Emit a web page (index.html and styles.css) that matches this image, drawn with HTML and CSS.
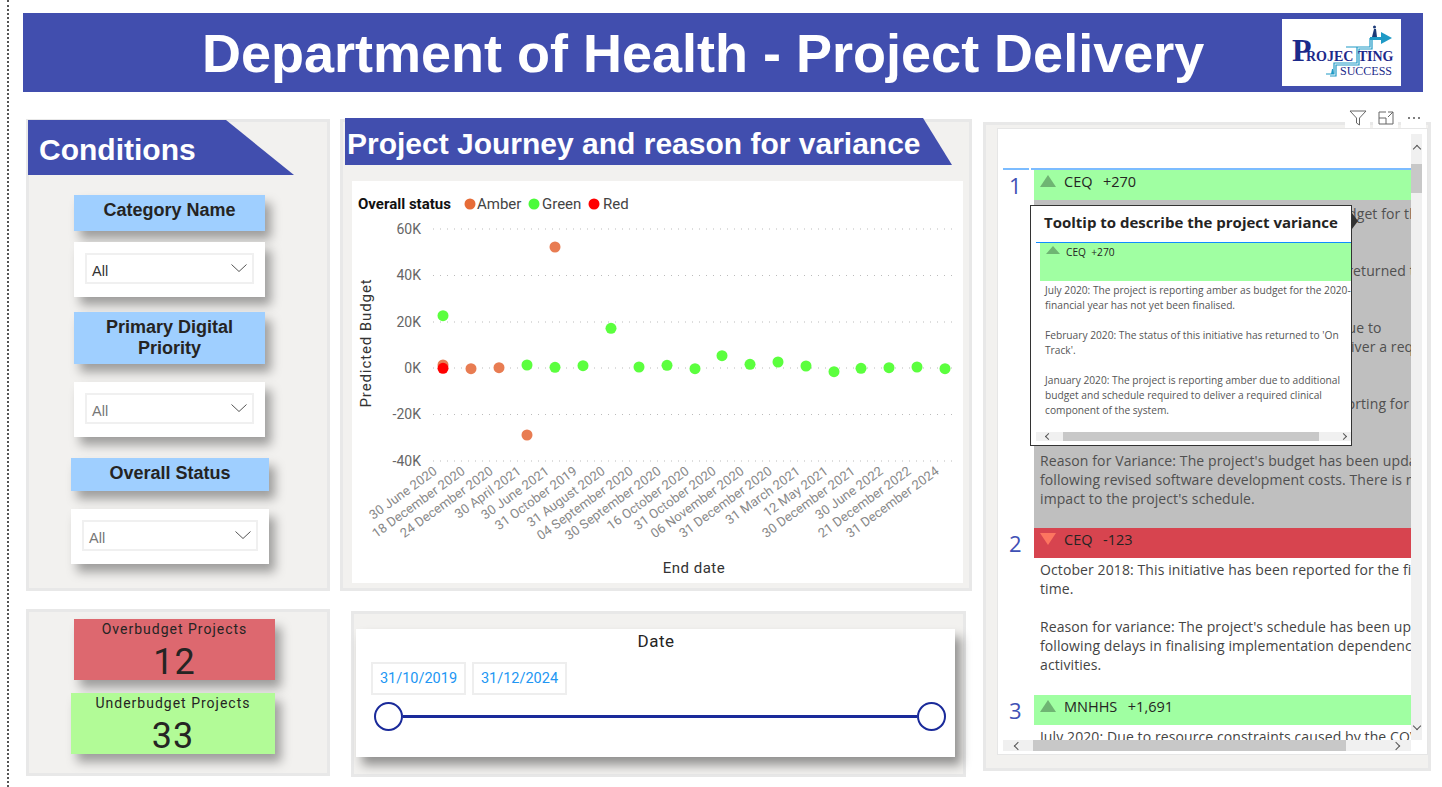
FILE: index.html
```html
<!DOCTYPE html>
<html lang="en">
<head>
    <meta charset="UTF-8">
    <title>Department of Health - Project Delivery</title>
    <link rel="stylesheet" href="styles.css">
</head>
<body>
<div class="report">

    <!-- Title bar -->
    <header class="title-bar">
        <h1>Department of Health - Project Delivery</h1>
        <div class="logo">
            <svg viewBox="1282 18 119 67" width="119" height="67">
                <g fill="none" stroke="#1f9ac6" stroke-width="1.200">
                    <path d="M1326 73h8v-11h23v-16M1346 46h24v-9"/>
                    <path d="M1330 75h6v-11h23v-16h13v-9"/>
                </g>
                <path d="M1370 36h12v3h-12z" fill="#1f9ac6"/>
                <path d="M1381 31l11 6l-11 6z" fill="#1f9ac6"/>
                <path d="M1372 36l2-8 2 0 1 8z" fill="#1c3a78"/>
                <circle cx="1374.500" cy="26" r="1.500" fill="#1c3a78"/>
                <path d="M1331 73l1-5 1 0 1 5z" fill="#1f9ac6"/>
                <text x="1292" y="60" class="logo-big">P</text>
                <text x="1306" y="60" class="logo-mid">ROJEC</text>
                <text x="1358" y="60" class="logo-mid">T</text>
                <text x="1367" y="60" class="logo-mid">ING</text>
                <text x="1340" y="74" class="logo-small">SUCCESS</text>
            </svg>
        </div>
    </header>

    <main class="canvas">

        <!-- Left column -->
        <div class="column col-left">
            <section class="panel conditions">
                <div class="banner banner-conditions">Conditions</div>
                <div class="filters">
                    <div class="filter-label label-one">Category Name</div>
                    <div class="filter-card card-one">
                        <div class="dropdown dark"><span>All</span><svg class="chevron" viewBox="0 0 16 8"><path d="M.5.5L8 7.500 15.500.5"/></svg></div>
                    </div>
                    <div class="filter-label label-two">Primary Digital Priority</div>
                    <div class="filter-card card-two">
                        <div class="dropdown"><span>All</span><svg class="chevron" viewBox="0 0 16 8"><path d="M.5.5L8 7.500 15.500.5"/></svg></div>
                    </div>
                    <div class="filter-label label-three wide">Overall Status</div>
                    <div class="filter-card card-three wide">
                        <div class="dropdown"><span>All</span><svg class="chevron" viewBox="0 0 16 8"><path d="M.5.5L8 7.500 15.500.5"/></svg></div>
                    </div>
                </div>
            </section>

            <section class="panel kpis">
                <div class="kpi kpi-red">
                    <div class="kpi-name">Overbudget Projects</div>
                    <div class="kpi-value">12</div>
                </div>
                <div class="kpi kpi-green">
                    <div class="kpi-name">Underbudget Projects</div>
                    <div class="kpi-value">33</div>
                </div>
            </section>
        </div>

        <!-- Middle column -->
        <div class="column col-mid">
            <section class="panel journey">
                <div class="banner banner-journey">Project Journey and reason for variance</div>
                <div class="chart">
                    <svg viewBox="352 181 611 402" width="611" height="402">
                        <!-- Legend -->
                        <text x="358" y="209" class="legend-title">Overall status</text>
                        <circle cx="470" cy="204" r="5.500" fill="#e66c37"/>
                        <text x="477" y="209" class="legend-text">Amber</text>
                        <circle cx="534" cy="204" r="5.500" fill="#4bfb3a"/>
                        <text x="542" y="209" class="legend-text">Green</text>
                        <circle cx="594" cy="204" r="5.500" fill="#ff0000"/>
                        <text x="603" y="209" class="legend-text">Red</text>

                        <!-- Grid -->
                        <g class="grid">
                            <line x1="433" x2="958" y1="229" y2="229"/>
                            <line x1="433" x2="958" y1="275.500" y2="275.500"/>
                            <line x1="433" x2="958" y1="322" y2="322"/>
                            <line x1="433" x2="958" y1="368" y2="368"/>
                            <line x1="433" x2="958" y1="414.500" y2="414.500"/>
                            <line x1="433" x2="958" y1="461" y2="461"/>
                        </g>
                        <g class="y-labels">
                            <text x="421" y="234">60K</text>
                            <text x="421" y="280">40K</text>
                            <text x="421" y="327">20K</text>
                            <text x="421" y="373">0K</text>
                            <text x="421" y="419">-20K</text>
                            <text x="421" y="466">-40K</text>
                        </g>

                        <!-- Points -->
                        <g class="amber">
                            <circle cx="443" cy="365" r="5.500"/>
                            <circle cx="471" cy="368.700" r="5.500"/>
                            <circle cx="499" cy="367.700" r="5.500"/>
                            <circle cx="527" cy="435" r="5.500"/>
                            <circle cx="555" cy="247" r="5.500"/>
                        </g>
                        <circle cx="443" cy="368.300" r="5.500" fill="#ff0000"/>
                        <g class="green">
                            <circle cx="443" cy="315.700" r="5.500"/>
                            <circle cx="527" cy="365" r="5.500"/>
                            <circle cx="555" cy="367.300" r="5.500"/>
                            <circle cx="583" cy="365.700" r="5.500"/>
                            <circle cx="611" cy="328.300" r="5.500"/>
                            <circle cx="639" cy="367" r="5.500"/>
                            <circle cx="667" cy="365.300" r="5.500"/>
                            <circle cx="695" cy="368.700" r="5.500"/>
                            <circle cx="722" cy="355.700" r="5.500"/>
                            <circle cx="750" cy="364.300" r="5.500"/>
                            <circle cx="778" cy="362" r="5.500"/>
                            <circle cx="806" cy="366" r="5.500"/>
                            <circle cx="834" cy="371.700" r="5.500"/>
                            <circle cx="861" cy="368.300" r="5.500"/>
                            <circle cx="889" cy="367.700" r="5.500"/>
                            <circle cx="917" cy="367" r="5.500"/>
                            <circle cx="945" cy="368.700" r="5.500"/>
                        </g>

                        <!-- Date labels -->
                        <g class="x-labels">
                            <text transform="translate(438 473) rotate(-36)">30 June 2020</text>
                            <text transform="translate(466 473) rotate(-36)">18 December 2020</text>
                            <text transform="translate(494 473) rotate(-36)">24 December 2020</text>
                            <text transform="translate(522 473) rotate(-36)">30 April 2021</text>
                            <text transform="translate(550 473) rotate(-36)">30 June 2021</text>
                            <text transform="translate(578 473) rotate(-36)">31 October 2019</text>
                            <text transform="translate(606 473) rotate(-36)">31 August 2020</text>
                            <text transform="translate(634 473) rotate(-36)">04 September 2020</text>
                            <text transform="translate(662 473) rotate(-36)">30 September 2020</text>
                            <text transform="translate(690 473) rotate(-36)">16 October 2020</text>
                            <text transform="translate(717 473) rotate(-36)">31 October 2020</text>
                            <text transform="translate(745 473) rotate(-36)">06 November 2020</text>
                            <text transform="translate(773 473) rotate(-36)">31 December 2020</text>
                            <text transform="translate(801 473) rotate(-36)">31 March 2021</text>
                            <text transform="translate(829 473) rotate(-36)">12 May 2021</text>
                            <text transform="translate(856 473) rotate(-36)">30 December 2021</text>
                            <text transform="translate(884 473) rotate(-36)">30 June 2022</text>
                            <text transform="translate(912 473) rotate(-36)">21 December 2022</text>
                            <text transform="translate(940 473) rotate(-36)">31 December 2024</text>
                        </g>

                        <text x="694" y="573" class="axis-title" text-anchor="middle">End date</text>
                        <text transform="translate(371 343) rotate(-90)" class="axis-title axis-title-y" text-anchor="middle">Predicted Budget</text>
                    </svg>
                </div>
            </section>

            <section class="panel date-panel">
                <div class="date-card">
                    <div class="date-title">Date</div>
                    <div class="date-boxes">
                        <div class="date-box">31/10/2019</div>
                        <div class="date-box">31/12/2024</div>
                    </div>
                    <div class="slider">
                        <span class="handle"></span>
                        <span class="track"></span>
                        <span class="handle"></span>
                    </div>
                </div>
            </section>
        </div>

        <!-- Right column -->
        <section class="panel variance">
            <div class="visual-icons">
                <span class="icon-box">
                    <svg viewBox="0 0 18 16" width="18" height="16"><path d="M1 1h16l-6.500 7v7l-3-2v-5z" fill="none" stroke="#666" stroke-width="1"/></svg>
                </span>
                <span class="icon-box">
                    <svg viewBox="0 0 16 14" width="16" height="14"><path d="M8 1H1v12h14V6M1 7h7v6M10 1h5v5M15 1L10 6" fill="none" stroke="#666" stroke-width="1"/></svg>
                </span>
                <span class="icon-box">
                    <svg viewBox="0 0 14 4" width="14" height="4"><circle cx="2" cy="2" r="1" fill="#555"/><circle cx="7" cy="2" r="1" fill="#555"/><circle cx="12" cy="2" r="1" fill="#555"/></svg>
                </span>
            </div>

            <div class="matrix-card">
                <div class="matrix">
                    <div class="matrix-view">
                        <div class="matrix-rule"><span></span><span></span></div>

                        <div class="row">
                            <div class="rank">1</div>
                            <div class="row-main">
                                <div class="row-head head-green"><i class="tri-up"></i>CEQ&nbsp;&nbsp;+270</div>
                                <div class="row-body body-grey">
                                    July 2020: The project is reporting amber as budget for the 2020-<br>
                                    financial year has not yet been finalised.<br>
                                    <br>
                                    February 2020: The status of this initiative has returned to 'On<br>
                                    Track'.<br>
                                    <br>
                                    January 2020: The project is reporting amber due to<br>
                                    additional budget and schedule required to deliver a required<br>
                                    clinical component of the system.<br>
                                    <br>
                                    October 2019: This initiative has now been reporting for the first<br>
                                    time.<br>
                                    <br>
                                    Reason for Variance: The project's budget has been updated<br>
                                    following revised software development costs. There is no<br>
                                    impact to the project's schedule.
                                </div>
                            </div>
                        </div>

                        <div class="row">
                            <div class="rank">2</div>
                            <div class="row-main">
                                <div class="row-head head-red"><i class="tri-down"></i>CEQ&nbsp;&nbsp;-123</div>
                                <div class="row-body body-white">
                                    October 2018: This initiative has been reported for the first<br>
                                    time.<br>
                                    <br>
                                    Reason for variance: The project's schedule has been updated<br>
                                    following delays in finalising implementation dependencies and<br>
                                    activities.
                                </div>
                            </div>
                        </div>

                        <div class="row">
                            <div class="rank">3</div>
                            <div class="row-main">
                                <div class="row-head head-green"><i class="tri-up"></i>MNHHS&nbsp;&nbsp;+1,691</div>
                                <div class="row-body body-white">
                                    July 2020: Due to resource constraints caused by the COVID-19
                                </div>
                            </div>
                        </div>
                    </div>

                    <div class="scroll-v">
                        <i class="chev chev-up"></i>
                        <span class="thumb-v"></span>
                        <i class="chev chev-down"></i>
                    </div>
                    <div class="scroll-h">
                        <i class="chev chev-left"></i>
                        <span class="thumb-h"></span>
                        <i class="chev chev-right"></i>
                    </div>
                </div>
            </div>

            <!-- Tooltip over the table -->
            <div class="tooltip">
                <div class="tooltip-title">Tooltip to describe the project variance</div>
                <div class="tooltip-head"><i class="tri-up tri-small"></i>CEQ&nbsp;&nbsp;+270</div>
                <div class="tooltip-body">
                    July 2020: The project is reporting amber as budget for the 2020-<br>
                    financial year has not yet been finalised.<br>
                    <br>
                    February 2020: The status of this initiative has returned to 'On<br>
                    Track'.<br>
                    <br>
                    January 2020: The project is reporting amber due to additional<br>
                    budget and schedule required to deliver a required clinical<br>
                    component of the system.
                </div>
                <div class="tooltip-scroll">
                    <i class="chev chev-left"></i>
                    <span class="thumb-tip"></span>
                    <i class="chev chev-right"></i>
                </div>
                <i class="tooltip-arrow"></i>
            </div>
        </section>

    </main>
</div>
</body>
</html>
```

FILE: styles.css
```css
* {
    box-sizing: border-box;
}

body {
    margin: 0;
    width: 1442px;
    height: 787px;
    overflow: hidden;
    background-color: #fff;
    font-family: 'Liberation Sans', Arial, sans-serif;
}

.report {
    height: 787px;
    margin-left: 7px;
    padding: 13px 0 0 14px;
    border-left: 2px dotted #555;
}

/* Title bar */
.title-bar {
    display: flex;
    align-items: center;
    justify-content: space-between;
    width: 1400px;
    height: 79px;
    padding: 0 22px 0 179px;
    background-color: #414eae;
}

.title-bar h1 {
    margin: 0;
    color: #fff;
    font-size: 54px;
    font-weight: bold;
    white-space: nowrap;
}

.logo {
    width: 119px;
    height: 67px;
    background-color: #fff;
}

.logo svg {
    display: block;
}

.logo text {
    font-family: 'Liberation Serif', serif;
    fill: #1c2a8a;
}

.logo-big {
    font-size: 32px;
    font-weight: bold;
}

.logo-mid {
    font-size: 14px;
    font-weight: bold;
}

.logo-small {
    font-size: 12px;
}

/* Main grid */
.canvas {
    display: flex;
    margin: 27px 0 0 3px;
}

.column {
    display: flex;
    flex-direction: column;
}

.col-left {
    width: 304px;
    margin-right: 10px;
}

.col-mid {
    width: 632px;
    margin-right: 11px;
}

.panel {
    background-color: #f2f1ef;
    border: 3px solid #e8e8e8;
}

/* Banners */
.banner {
    background-color: #414eae;
    color: #fff;
    font-weight: bold;
    white-space: nowrap;
}

.banner-conditions {
    width: 266px;
    height: 55px;
    margin: -2px 0 0 -1px;
    padding: 13px 0 0 11px;
    font-size: 30px;
    clip-path: polygon(0 0, 198px 0, 100% 100%, 0 100%);
}

.banner-journey {
    width: 607px;
    height: 47px;
    margin: -4px 0 0 2px;
    padding: 9px 0 0 2px;
    font-size: 30px;
    clip-path: polygon(0 0, 578px 0, 100% 100%, 0 100%);
}

/* Left filters */
.conditions {
    height: 472px;
}

.filters {
    display: flex;
    flex-direction: column;
    margin-left: 45px;
    width: 191px;
}

.filter-label {
    padding: 5px 20px 0;
    background-color: #9fcfff;
    color: #252423;
    font-size: 18px;
    font-weight: bold;
    line-height: 21px;
    text-align: center;
    box-shadow: 6px 8px 10px rgba(0, 0, 0, 0.35);
}

.label-one {
    height: 36px;
    margin-top: 20px;
}

.label-two {
    height: 52px;
    margin-top: 15px;
    padding-top: 5px;
}

.label-three {
    height: 33px;
    margin-top: 21px;
    padding-top: 5px;
}

.wide {
    width: 198px;
    margin-left: -3px;
}

.filter-card {
    height: 55px;
    padding: 11px;
    background-color: #fff;
    box-shadow: 6px 8px 10px rgba(0, 0, 0, 0.35);
}

.card-one {
    margin-top: 11px;
}

.card-two {
    margin-top: 18px;
}

.card-three {
    margin-top: 18px;
}

.dropdown {
    display: flex;
    align-items: center;
    justify-content: space-between;
    height: 31px;
    padding: 4px 5px 0 5px;
    border: 2px solid #f0f0f0;
    color: #777;
    font-size: 14.500px;
}

.dropdown.dark {
    color: #333;
}

.chevron {
    width: 16px;
    height: 8px;
    margin-top: -6px;
    fill: none;
    stroke: #555;
    stroke-width: 1;
}

/* KPI cards */
.col-left .kpis {
    height: 167px;
    margin-top: 18px;
    padding: 7px 0 0 42px;
}

.kpi {
    height: 61px;
    color: #252423;
    text-align: center;
    font-family: Roboto, sans-serif;
    box-shadow: 6px 8px 10px rgba(0, 0, 0, 0.35);
}

.kpi-red {
    width: 201px;
    margin-left: 3px;
    background-color: #dd686f;
}

.kpi-green {
    width: 204px;
    margin-top: 13px;
    background-color: #b2fb97;
}

.kpi-name {
    padding-top: 1px;
    font-size: 14px;
    line-height: 18px;
    letter-spacing: 1px;
}

.kpi-value {
    padding-top: 3px;
    font-size: 36px;
    line-height: 42px;
    letter-spacing: 1px;
}

/* Chart */
.journey {
    height: 472px;
}

.chart {
    width: 611px;
    height: 402px;
    margin: 16px 0 0 9px;
    background-color: #fff;
}

.chart svg {
    display: block;
    font-family: Roboto, sans-serif;
}

.legend-title {
    font-size: 15px;
    font-weight: bold;
    fill: #111;
}

.legend-text {
    font-size: 15px;
    fill: #444;
}

.grid line {
    stroke: #bbb;
    stroke-width: 1;
    stroke-dasharray: 1 6;
}

.y-labels text {
    font-size: 14px;
    fill: #666;
    text-anchor: end;
}

.x-labels text {
    font-size: 13px;
    fill: #888;
    text-anchor: end;
    letter-spacing: 0.100px;
}

.amber circle {
    fill: #e87c52;
}

.green circle {
    fill: #5bff3e;
}

.axis-title {
    font-size: 15px;
    fill: #333;
    letter-spacing: 0.500px;
}

.axis-title-y {
    letter-spacing: 0.900px;
}

/* Date slicer */
.date-panel {
    width: 615px;
    height: 166px;
    margin: 20px 0 0 11px;
}

.date-card {
    width: 599px;
    height: 128px;
    margin: 15px 0 0 2px;
    padding: 0 9px 0 15px;
    background-color: #fff;
    box-shadow: 6px 8px 10px rgba(0, 0, 0, 0.4);
}

.date-title {
    padding: 2px 5px 0 0;
    font-family: Roboto, sans-serif;
    font-size: 17px;
    line-height: 20px;
    letter-spacing: 0.500px;
    color: #252423;
    text-align: center;
}

.date-boxes {
    display: flex;
    gap: 6px;
    margin-top: 11px;
}

.date-box {
    width: 95px;
    height: 33px;
    border: 2px solid #eee;
    color: #2196f3;
    font-family: Roboto, sans-serif;
    font-size: 14.500px;
    line-height: 30px;
    text-align: center;
}

.slider {
    display: flex;
    align-items: center;
    margin: 7px 0 0 3px;
}

.track {
    flex: 1;
    height: 3px;
    background-color: #1a2a9a;
}

.handle {
    width: 29px;
    height: 29px;
    border: 2px solid #1a2a9a;
    border-radius: 50%;
    background-color: #fff;
}

/* Right panel */
.variance {
    position: relative;
    width: 448px;
    height: 649px;
    margin-top: 3px;
    padding: 3px 1px 0 11px;
}

.visual-icons {
    position: absolute;
    top: -17px;
    right: 2px;
    display: flex;
    gap: 3px;
}

.icon-box {
    display: flex;
    align-items: center;
    justify-content: center;
    width: 25px;
    height: 20px;
    background-color: #fff;
}

.matrix-card {
    width: 431px;
    height: 627px;
    padding: 5px 0 0 5px;
    background-color: #fff;
    border: 1px solid #e6e6e6;
}

.matrix {
    display: grid;
    grid-template-columns: 408px 11px;
    grid-template-rows: 606px 11px;
}

.matrix-view {
    overflow: hidden;
    padding-top: 34px;
    font-family: 'Open Sans', sans-serif;
}

.matrix-rule {
    display: flex;
    gap: 2px;
    height: 2px;
}

.matrix-rule span {
    width: 26px;
    background-color: #7cbcff;
}

.matrix-rule span + span {
    flex: 1;
}

.row {
    display: flex;
}

.rank {
    width: 31px;
    padding: 2px 0 0 6px;
    color: #3f51b5;
    font-size: 22px;
    line-height: 26px;
    text-align: left;
}

.row-main {
    width: 377px;
    overflow: hidden;
}

.row-head {
    display: flex;
    align-items: flex-start;
    height: 30px;
    padding: 2px 0 0 6px;
    color: #252423;
    font-size: 14.500px;
    line-height: 19px;
    word-spacing: 1.500px;
    white-space: nowrap;
}

.head-green {
    background-color: #a0ffa2;
}

.head-red {
    background-color: #d7444f;
}

.tri-up,
.tri-down {
    width: 0;
    height: 0;
    margin: 3px 8px 0 0;
    border-left: 8.500px solid transparent;
    border-right: 8.500px solid transparent;
}

.tri-up {
    border-bottom: 12px solid #6fb573;
}

.tri-down {
    border-top: 12px solid #fd7560;
}

.row-body {
    padding-left: 6px;
    font-size: 14px;
    line-height: 19px;
    letter-spacing: 0.100px;
    white-space: nowrap;
}

.body-grey {
    height: 328px;
    padding-top: 3.500px;
    background-color: #bfbfbf;
    color: #505050;
}

.body-white {
    height: 137px;
    padding-top: 2px;
    color: #444;
}

/* Scrollbars */
.chev {
    width: 6px;
    height: 6px;
    flex: none;
    border-top: 1px solid #555;
    border-left: 1px solid #555;
}

.chev-up {
    transform: rotate(45deg);
}

.chev-down {
    transform: rotate(225deg);
}

.chev-left {
    transform: rotate(-45deg);
}

.chev-right {
    transform: rotate(135deg);
}

.scroll-v {
    display: flex;
    flex-direction: column;
    align-items: center;
    padding-top: 12px;
    background-color: #f0f0f0;
}

.thumb-v {
    width: 11px;
    height: 29px;
    margin: 12px 0 530px;
    background-color: #c8c8c8;
}

.scroll-h {
    display: flex;
    align-items: center;
    padding-left: 12px;
    background-color: #f0f0f0;
}

.thumb-h {
    width: 313px;
    height: 11px;
    margin: 0 47px 0 12px;
    background-color: #c8c8c8;
}

/* Tooltip */
.tooltip {
    position: absolute;
    top: 80px;
    left: 44px;
    width: 322px;
    height: 241px;
    padding-top: 6px;
    background-color: #fff;
    border: 1px solid #333;
    font-family: 'Open Sans', sans-serif;
}

.tooltip-title {
    height: 31px;
    margin-left: 5px;
    padding-left: 8px;
    border-bottom: 1px solid #118dff;
    color: #252423;
    font-size: 15px;
    font-weight: bold;
    line-height: 20px;
    white-space: nowrap;
}

.tooltip-head {
    display: flex;
    height: 38px;
    margin-left: 9px;
    padding: 1px 0 0 6px;
    background-color: #a0ffa2;
    color: #252423;
    font-size: 10.200px;
    line-height: 16px;
}

.tri-small {
    margin: 2px 6px 0 0;
    border-left-width: 7px;
    border-right-width: 7px;
    border-bottom-width: 8px;
}

.tooltip-body {
    height: 151px;
    padding: 2px 0 0 14px;
    color: #555;
    font-size: 10.200px;
    line-height: 15px;
    white-space: nowrap;
    overflow: hidden;
}

.tooltip-scroll {
    display: flex;
    align-items: center;
    height: 9px;
    margin-left: 5px;
    padding-left: 10px;
    background-color: #f0f0f0;
}

.tooltip-scroll .chev {
    width: 5px;
    height: 5px;
}

.thumb-tip {
    width: 256px;
    height: 9px;
    margin: 0 22px 0 12px;
    background-color: #c8c8c8;
}

.tooltip-arrow {
    position: absolute;
    top: 7px;
    left: 321px;
    width: 0;
    height: 0;
    border-top: 8px solid transparent;
    border-bottom: 8px solid transparent;
    border-left: 6px solid #333;
}
```
